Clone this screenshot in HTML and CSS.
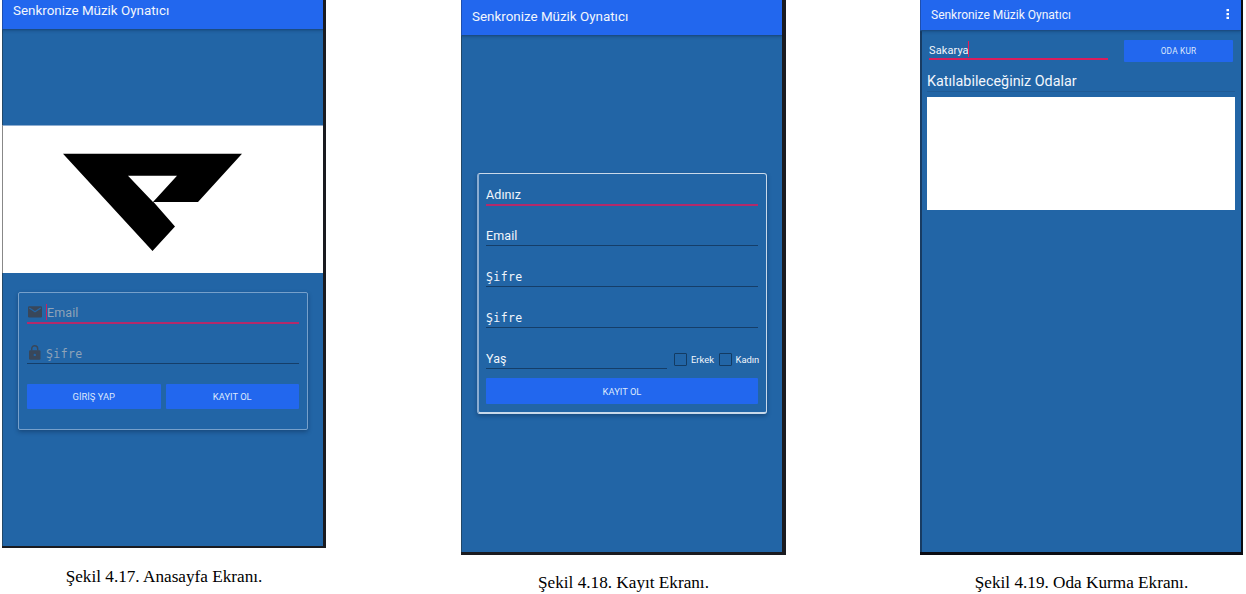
FILE: index.html
```html
<!DOCTYPE html>
<html lang="tr">
<head>
<meta charset="utf-8">
<title>Senkronize Müzik Oynatıcı</title>
<link rel="stylesheet" href="styles.css">
</head>
<body>
<main class="figures">
  <figure class="figure figure-home">
    <div class="phone">
      <header class="appbar"><span class="title">Senkronize Müzik Oynatıcı</span></header>
      <div class="banner">
        <svg width="321" height="148" viewBox="2 125 321 148"><path fill="#000" fill-rule="evenodd" d="M63 153.7H242L198 202H153.5L175 226.5L152.5 251ZM128 175.8L153 202L177 175.8Z"/></svg>
      </div>
      <section class="card">
        <div class="field active">
          <svg class="icon" width="14" height="12" viewBox="0 0 14 12"><path fill="#39475a" d="M1.200 .3H12.800Q14 .3 14 1.500V10.300Q14 11.500 12.800 11.500H1.200Q0 11.500 0 10.300V1.500Q0 .3 1.200 .3Z"/><path fill="none" stroke="#2265a6" stroke-width="1.300" d="M1.300 2L7 5.800L12.700 2"/></svg>
          <i class="caret"></i><span class="hint">Email</span>
        </div>
        <div class="field">
          <svg class="icon" width="14" height="15" viewBox="0 0 14 15"><rect x="1" y="5.300" width="11.500" height="9.400" rx="1.200" fill="#39475a"/><path fill="none" stroke="#39475a" stroke-width="1.400" d="M3.700 5.500V3.700a3 3 0 0 1 6 0V5.500"/><circle cx="6.800" cy="9.900" r="1.200" fill="#2265a6"/></svg>
          <span class="hint mono">Şifre</span>
        </div>
        <div class="buttons">
          <button class="button"><span>GİRİŞ YAP</span></button>
          <button class="button"><span>KAYIT OL</span></button>
        </div>
      </section>
    </div>
    <figcaption>Şekil 4.17. Anasayfa Ekranı.</figcaption>
  </figure>

  <figure class="figure figure-signup">
    <div class="phone">
      <header class="appbar"><span class="title">Senkronize Müzik Oynatıcı</span></header>
      <section class="card">
        <div class="field active"><span>Adınız</span></div>
        <div class="field"><span>Email</span></div>
        <div class="field"><span class="mono">Şifre</span></div>
        <div class="field"><span class="mono">Şifre</span></div>
        <div class="age-row">
          <div class="field"><span>Yaş</span></div>
          <label class="check"><i class="box"></i><span>Erkek</span></label>
          <label class="check"><i class="box"></i><span>Kadın</span></label>
        </div>
        <button class="button"><span>KAYIT OL</span></button>
      </section>
    </div>
    <figcaption>Şekil 4.18. Kayıt Ekranı.</figcaption>
  </figure>

  <figure class="figure figure-room">
    <div class="phone">
      <header class="appbar"><span class="title">Senkronize Müzik Oynatıcı</span>
        <svg width="4" height="12" viewBox="0 0 4 12"><path fill="#fff" d="M.5 1h2.500v2.300H.5zM.5 4.900h2.500v2.300H.5zM.5 8.700h2.500V11H.5z"/></svg>
      </header>
      <div class="create-row">
        <div class="field active"><span class="value">Sakarya</span><i class="caret"></i></div>
        <button class="button"><span>ODA KUR</span></button>
      </div>
      <h2 class="heading"><span>Katılabileceğiniz Odalar</span></h2>
      <div class="rooms"></div>
    </div>
    <figcaption>Şekil 4.19. Oda Kurma Ekranı.</figcaption>
  </figure>
</main>
</body>
</html>
```
FILE: styles.css
```css
* { box-sizing: border-box; }
body { margin: 0; background: #fff; overflow: hidden; }
.figures { display: flex; align-items: flex-start; height: 594px; padding-left: 2px; }
.figure { margin: 0; flex: none; }
.figure-home { width: 324px; margin-right: 135px; }
.figure-signup { width: 325px; margin-right: 134px; }
.figure-room { width: 323px; }

.phone {
  background: #2265a6;
  font-family: Roboto, sans-serif;
  color: #f2f6fc;
  border: solid #1a1b20;
  border-width: 0 3px 2px 0;
  box-shadow: inset 1px 0 #234868;
  height: 548px;
  overflow: hidden;
}
.figure-signup .phone { height: 555px; border-width: 0 4px 3px 0; }
.figure-room .phone { height: 555px; border-width: 0 2px 3px 0; border-color: #0b0c12; box-shadow: inset 2px 0 #183c63; }

.appbar {
  display: flex;
  justify-content: space-between;
  height: 29px;
  padding-left: 11px;
  background: #2267ee;
  box-shadow: 0 1px 1px #1b4c83, 0 2px 3px rgba(10, 40, 80, .3), inset 1px 0 #1f4fae;
  font-size: 13.400px;
  line-height: 21px;
  white-space: nowrap;
}
.figure-signup .appbar { height: 35px; line-height: 34px; }
.figure-room .appbar { height: 30px; line-height: 30px; font-size: 12px; padding-right: 11px; }
.appbar svg { margin-top: 8px; }

.banner { height: 148px; margin-top: 96px; background: #fff; box-shadow: inset 1px 0 #888, inset 0 1px #8eadd0; }
.banner svg { display: block; }

.card { width: 290px; border: 1px solid #76a0cb; border-radius: 2px; box-shadow: 0 2px 4px rgba(10, 35, 70, .42); }
.figure-home .card { height: 138px; margin: 19px 0 0 16px; padding: 8px; }
.figure-signup .card { height: 241px; margin: 138px 0 0 16px; padding: 0 7px; border: 1px solid #c9d9ea; border-width: 1px 1px 2px 2px; border-left-color: #8badd2; border-radius: 3px; }

.field { display: flex; align-items: center; border-bottom: 1px solid #153e69; font-size: 12.500px; line-height: 18px; white-space: nowrap; }
.field span { padding-top: 3px; letter-spacing: .1px; }
.field.active { border-bottom: 2px solid #b32a6b; }
.field .mono { padding-top: 3px; font-family: "DejaVu Sans Mono", monospace; font-size: 11.500px; letter-spacing: .4px; }
.hint { color: #8fa3b8; }
.icon { margin-left: 1px; margin-right: 4px; }
.caret { flex: none; width: 1px; height: 16px; background: #c42462; }

.figure-home .field { height: 23px; width: 272px; }
.figure-home .field + .field { margin-top: 17px; }
.buttons { display: flex; gap: 5px; margin-top: 20px; width: 272px; }
.figure-home .button { flex: 1; height: 25px; }

.button { display: flex; align-items: center; justify-content: center; height: 26px; padding: 0; border: 0; border-radius: 1px; background: #2267ee; color: #dce8fc; font: 9.400px Roboto, sans-serif; white-space: nowrap; }

.figure-signup .field { width: 272px; height: 23px; margin-bottom: 18px; }
.figure-signup .field.active { margin-top: 9px; margin-bottom: 17px; }
.age-row { display: flex; width: 278px; height: 23px; }
.figure-signup .age-row .field { flex: none; width: 181px; margin: 0 7px 0 0; }
.check { display: flex; align-items: center; width: 44.500px; gap: 4px; font-size: 9.400px; white-space: nowrap; flex: none; padding-top: 4px; }
.box { width: 13px; height: 13px; border: 1px solid #133b63; border-radius: 1px; flex: none; }
.figure-signup .button { width: 272px; margin-top: 9px; }

.create-row { display: flex; margin: 10px 0 0 9px; }
.create-row .field { width: 179px; height: 20px; font-size: 11px; border-color: #d91d5d; margin-right: 16px; }
.create-row .value { width: 39px; }
.create-row .caret { background: #e31c58; }
.create-row .button { width: 109px; height: 22px; font-size: 8.300px; letter-spacing: .2px; }
.heading { width: 308px; height: 22px; margin: 8px 0 0 7px; border-bottom: 1px solid #205b96; font-size: 14.350px; font-weight: 400; line-height: 24px; white-space: nowrap; }
.rooms { width: 308px; height: 113px; margin: 5px 0 0 7px; background: #fff; }

figcaption { font: 17.200px/20px "Liberation Serif", serif; text-align: center; color: #000; white-space: nowrap; margin-top: 19px; }
.figure-signup figcaption { margin-top: 18px; }
.figure-room figcaption { margin-top: 18px; }
```
